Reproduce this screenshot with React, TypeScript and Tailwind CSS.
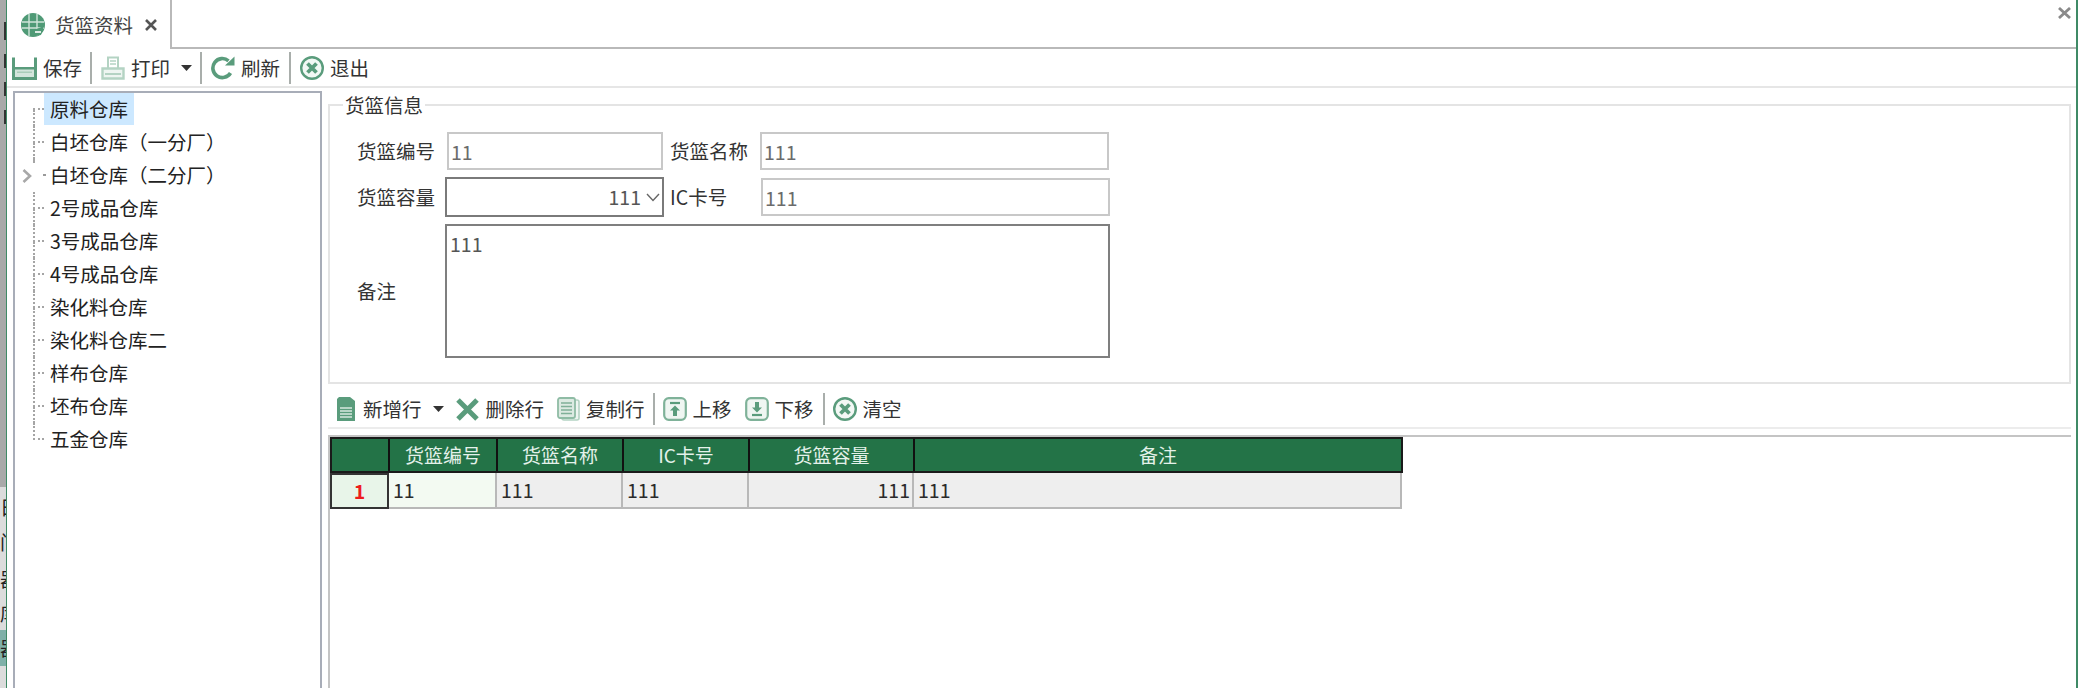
import React from "react";

const G = "#5a9c7c";
const L = "#b4d3c3";

const SaveIcon = () => (
  <svg width="25" height="24" viewBox="0 0 25 24" className="shrink-0">
    <path d="M1.5 1.5V22.5H23.5V1.5" fill="none" stroke={G} strokeWidth="3" />
    <rect x="3" y="13" width="19" height="8" fill="#d3e5db" />
    <rect x="3" y="11" width="19" height="2.5" fill={G} />
    <rect x="5" y="15.5" width="15" height="1.5" fill="#a9cdb9" />
  </svg>
);
const PrintIcon = () => (
  <svg width="24" height="24" viewBox="0 0 24 24" className="shrink-0">
    <path d="M7 12V1.5H17V12" fill="none" stroke={L} strokeWidth="2" />
    <path d="M9 5H15M9 8H15" stroke={L} strokeWidth="1.5" />
    <path d="M1.5 12.5H22.5V22.5H1.5Z" fill="#eef5f1" stroke={L} strokeWidth="2.4" />
    <rect x="4" y="17" width="16" height="2" fill={L} />
  </svg>
);
const RefreshIcon = () => (
  <svg width="24" height="24" viewBox="0 0 24 24" className="shrink-0">
    <path d="M19.5 17A9.5 9.5 0 1 1 17.5 4.8" fill="none" stroke={G} strokeWidth="3.6" />
    <path d="M14 9.5H23.5V0.5Z" fill={G} />
  </svg>
);
const CircleX = ({ s = 24 }: { s?: number }) => (
  <svg width={s} height={s} viewBox="0 0 24 24" className="shrink-0">
    <circle cx="12" cy="12" r="10.8" fill="#f3f8f5" stroke={G} strokeWidth="2.4" />
    <path d="M7.5 7.5L16.5 16.5M16.5 7.5L7.5 16.5" stroke={G} strokeWidth="3.8" />
  </svg>
);
const Caret = () => (
  <svg width="11" height="6" viewBox="0 0 11 6" className="shrink-0">
    <path d="M0 0H11L5.5 6Z" fill="#333" />
  </svg>
);
const NewIcon = () => (
  <svg width="18" height="24" viewBox="0 0 18 24" className="shrink-0">
    <path d="M2 0H13L18 4V24H0V2Z" fill={G} />
    <path d="M3 11H15M3 14H15M3 17H15M3 20H15" stroke="#d7e7de" strokeWidth="1.4" />
  </svg>
);
const DelIcon = () => (
  <svg width="23" height="23" viewBox="0 0 23 23" className="shrink-0">
    <path d="M2 2L21 21M21 2L2 21" stroke={G} strokeWidth="5" />
  </svg>
);
const CopyIcon = () => (
  <svg width="23" height="24" viewBox="0 0 23 24" className="shrink-0">
    <rect x="5" y="3" width="17" height="20" rx="2" fill="#eef5f1" stroke={L} strokeWidth="1.6" />
    <rect x="1" y="1" width="17" height="20" rx="2" fill="#dceae2" stroke="#8fbca5" strokeWidth="1.8" />
    <path d="M4 6H15M4 9.5H15M4 13H15M4 16.5H15" stroke="#7fb098" strokeWidth="1.5" />
  </svg>
);
const UpIcon = () => (
  <svg width="24" height="24" viewBox="0 0 24 24" className="shrink-0">
    <rect x="1.2" y="1.2" width="21.6" height="21.6" rx="4.5" fill="#eff6f2" stroke="#7fb299" strokeWidth="2.2" />
    <path d="M7 6H17" stroke={G} strokeWidth="2.2" />
    <path d="M12 8.5L17 13.5H14V19H10V13.5H7Z" fill={G} />
  </svg>
);
const DownIcon = () => (
  <svg width="24" height="24" viewBox="0 0 24 24" className="shrink-0">
    <rect x="1.2" y="1.2" width="21.6" height="21.6" rx="4.5" fill="#eff6f2" stroke="#7fb299" strokeWidth="2.2" />
    <path d="M7 18H17" stroke={G} strokeWidth="2.2" />
    <path d="M12 15.5L17 10.5H14V5H10V10.5H7Z" fill={G} />
  </svg>
);
const Globe = () => (
  <svg width="24" height="24" viewBox="0 0 24 24" className="shrink-0">
    <circle cx="12" cy="12" r="12" fill="#4f9a76" />
    <path d="M1 9H23M1 15H23M8 1V23M16 1V23" stroke="#cfe4d9" strokeWidth="1.4" />
    <path d="M13 17L23 13L20 22L15 23Z" fill="#4f9a76" />
    <path d="M14 19H20" stroke="#fff" strokeWidth="1.6" />
  </svg>
);
const Sep = ({ h = 32 }: { h?: number }) => (
  <div className="w-[2px] shrink-0 bg-[#a9aeab]" style={{ height: h }} />
);

const treeItems = [
  "原料仓库",
  "白坯仓库（一分厂）",
  "白坯仓库（二分厂）",
  "2号成品仓库",
  "3号成品仓库",
  "4号成品仓库",
  "染化料仓库",
  "染化料仓库二",
  "样布仓库",
  "坯布仓库",
  "五金仓库",
];

const TreeRow = ({ text, index }: { text: string; index: number }) => {
  const first = index === 0;
  const last = index === treeItems.length - 1;
  const expandable = index === 2;
  return (
    <div className="flex h-[33px] items-stretch">
      <div className="w-[18px] shrink-0 flex items-center justify-end pr-[1px]">
        {expandable && (
          <svg width="10" height="14" viewBox="0 0 10 14">
            <path d="M1.5 1L8 7L1.5 13" fill="none" stroke="#a8a8a8" strokeWidth="2.6" />
          </svg>
        )}
      </div>
      <div className="w-[11px] shrink-0 flex flex-col">
        {expandable ? (
          <>
            <div className="h-[4px] border-l-2 border-dotted border-[#a5a5a5]" />
            <div className="h-[13px] ml-[10px] border-b-2 border-dotted border-[#9a9a9a] w-[1px]" />
            <div className="flex-1" />
          </>
        ) : (
          <>
            <div
              className={
                "h-[17px] border-b-2 border-dotted border-[#a5a5a5] " +
                (first ? "" : "border-l-2")
              }
            />
            <div className={"flex-1 border-dotted border-[#a5a5a5] " + (last ? "" : "border-l-2")} />
          </>
        )}
      </div>
      <div
        className={
          "px-[6px] h-[32px] leading-[32px] whitespace-nowrap text-[19.5px] text-[#222] " +
          (first ? "bg-[#cce8ff]" : "")
        }
      >
        {text}
      </div>
    </div>
  );
};

const Field = ({ value, w }: { value: string; w: string }) => (
  <div
    className={
      "h-[38px] border-2 border-[#c8c8c8] px-[2px] leading-[35px] text-[19.5px] text-[#6b6b6b] " + w
    }
  >
    {value}
  </div>
);

const cols = [
  { t: "", w: "w-[58px]" },
  { t: "货篮编号", w: "w-[108px]" },
  { t: "货篮名称", w: "w-[126px]" },
  { t: "IC卡号", w: "w-[126px]" },
  { t: "货篮容量", w: "w-[165px]" },
  { t: "备注", w: "w-[486px]" },
];

const StripText = ({ c, h, teal }: { c: string; h: string; teal?: boolean }) => (
  <div
    className={
      "overflow-hidden whitespace-nowrap text-[19px] text-[#222] " + h + (teal ? " bg-[#7fb0a8]" : "")
    }
  >
    {c}
  </div>
);

export default function App() {
  return (
    <div
      className="flex w-[2078px] h-[688px] overflow-hidden bg-white text-[#333]"
      style={{ fontFamily: '"Noto Sans CJK SC", "Noto Sans", sans-serif' }}
    >
      {/* clipped window behind */}
      <div className="w-[6px] shrink-0 h-full flex flex-col overflow-hidden bg-[#dcdcdc]">
        <div className="h-[487px] shrink-0 bg-[#a9a9a9] flex flex-col items-end pt-[22px] gap-[14px]">
          <div className="w-[2px] h-[18px] bg-[#333]" />
          <div className="w-[2px] h-[14px] bg-[#333]" />
          <div className="w-[2px] h-[14px] bg-[#333]" />
          <div className="w-[2px] h-[14px] bg-[#333]" />
        </div>
        <StripText c="日" h="h-[35px] leading-[40px]" />
        <StripText c="门" h="h-[40px] leading-[40px]" />
        <StripText c="器" h="h-[34px] leading-[34px]" />
        <StripText c="库" h="h-[34px] leading-[34px]" />
        <StripText c="器" h="h-[36px] leading-[36px]" teal />
      </div>
      <div className="w-[1px] shrink-0 bg-[#3f8a66]" />

      <div className="w-[2069px] shrink-0 flex flex-col h-full">
        {/* Tab bar */}
        <div className="h-[49px] shrink-0 flex border-b-2 border-[#b9b9b9]">
          <div className="w-[165px] flex items-center pl-[14px] border-r-2 border-[#b9b9b9] h-[49px] bg-white">
            <Globe />
            <span className="ml-[10px] text-[19.5px] text-[#444] whitespace-nowrap">货篮资料</span>
            <svg width="12" height="12" viewBox="0 0 12 12" className="ml-[12px]">
              <path d="M1 1L11 11M11 1L1 11" stroke="#555" strokeWidth="2.6" />
            </svg>
          </div>
          <div className="flex-1 flex justify-end pr-[5px] pt-[7px]">
            <svg width="13" height="12" viewBox="0 0 13 12">
              <path d="M1 1L12 11M12 1L1 11" stroke="#8a8a8a" strokeWidth="2.8" />
            </svg>
          </div>
        </div>

        {/* Toolbar */}
        <div className="h-[39px] shrink-0 flex items-center border-b-2 border-[#e6e6e6] pl-[5px] text-[19.5px] text-[#333]">
          <SaveIcon />
          <span className="ml-[6px] mr-[8px]">保存</span>
          <Sep />
          <div className="w-[9px]" />
          <PrintIcon />
          <span className="ml-[6px] mr-[11px]">打印</span>
          <Caret />
          <div className="w-[8px]" />
          <Sep />
          <div className="w-[9px]" />
          <RefreshIcon />
          <span className="ml-[6px] mr-[9px]">刷新</span>
          <Sep />
          <div className="w-[9px]" />
          <CircleX />
          <span className="ml-[6px]">退出</span>
        </div>

        {/* Body */}
        <div className="flex-1 min-h-0 flex pt-[3px]">
          {/* Tree */}
          <div className="ml-[6px] w-[309px] shrink-0 border-2 border-b-0 border-[#a8adb8] h-[700px] overflow-hidden">
            {treeItems.map((t, i) => (
              <TreeRow key={t} text={t} index={i} />
            ))}
          </div>

          {/* Right */}
          <div className="ml-[6px] flex-1 min-w-0 flex flex-col pr-[5px]">
            <fieldset className="border-2 border-[#e4e4e4] h-[292px] mt-[1px] shrink-0 px-[13px] pb-0">
              <legend className="px-[2px] text-[19.5px] leading-[26px] text-[#333]">货篮信息</legend>
              <div className="flex flex-col pl-[14px] pt-[14px] text-[19.5px] text-[#333]">
                <div className="flex items-center h-[38px]">
                  <span className="w-[90px] whitespace-nowrap">货篮编号</span>
                  <Field value="11" w="w-[216px]" />
                  <span className="ml-[7px] w-[90px] whitespace-nowrap">货篮名称</span>
                  <Field value="111" w="w-[349px]" />
                </div>
                <div className="flex items-center h-[40px] mt-[7px]">
                  <span className="w-[88px] whitespace-nowrap">货篮容量</span>
                  <div className="w-[219px] h-[40px] border-2 border-[#7a7a7a] flex items-center justify-end pr-[2px] text-[#555]">
                    <span>111</span>
                    <svg width="14" height="9" viewBox="0 0 14 9" className="ml-[5px]">
                      <path d="M1 1L7 7.5L13 1" fill="none" stroke="#666" strokeWidth="1.4" />
                    </svg>
                  </div>
                  <span className="ml-[6px] w-[91px] whitespace-nowrap">IC卡号</span>
                  <Field value="111" w="w-[349px]" />
                </div>
                <div className="flex items-center h-[134px] mt-[7px]">
                  <span className="w-[88px] whitespace-nowrap">备注</span>
                  <div className="w-[665px] h-[134px] border-2 border-[#7f7f7f] px-[3px] pt-[3px] leading-[30px] text-[#555]">
                    111
                  </div>
                </div>
              </div>
            </fieldset>

            {/* Row toolbar */}
            <div className="h-[45px] shrink-0 flex items-center border-b-2 border-[#ececec] pl-[9px] pt-[7px] text-[19.5px] text-[#333]">
              <NewIcon />
              <span className="ml-[8px] mr-[11px] whitespace-nowrap">新增行</span>
              <Caret />
              <div className="w-[12px]" />
              <DelIcon />
              <span className="ml-[7px] mr-[13px] whitespace-nowrap">删除行</span>
              <CopyIcon />
              <span className="ml-[6px] mr-[8px] whitespace-nowrap">复制行</span>
              <Sep />
              <div className="w-[8px]" />
              <UpIcon />
              <span className="ml-[6px] mr-[13px] whitespace-nowrap">上移</span>
              <DownIcon />
              <span className="ml-[6px] mr-[9px] whitespace-nowrap">下移</span>
              <Sep />
              <div className="w-[8px]" />
              <CircleX />
              <span className="ml-[6px] whitespace-nowrap">清空</span>
            </div>

            {/* Grid */}
            <div className="mt-[6px] flex-1 border-l-2 border-t-2 border-[#c4c4c4]">
              <div className="flex h-[36px] bg-[#237347] border-2 border-[#1a1a1a] w-fit text-[19px] text-[#e4f1ea]">
                {cols.map((c, i) => (
                  <div
                    key={i}
                    className={
                      "flex items-center justify-center whitespace-nowrap " +
                      c.w +
                      (i < cols.length - 1 ? " border-r-2 border-[#111]" : "")
                    }
                  >
                    {c.t}
                  </div>
                ))}
              </div>
              <div className="flex h-[36px] w-fit text-[19.5px] text-[#2a2a2a]">
                <div className="w-[59px] bg-[#e8f5e9] border-2 border-[#333] flex items-center justify-center font-bold text-[#ee1c1c]">
                  1
                </div>
                <div className="w-[108px] bg-[#f3faf2] border-b-2 border-r-2 border-[#b8b8b8] pl-[4px] leading-[33px]">
                  11
                </div>
                <div className="w-[126px] bg-[#eeeeee] border-b-2 border-r-2 border-[#b8b8b8] pl-[4px] leading-[33px]">
                  111
                </div>
                <div className="w-[126px] bg-[#eeeeee] border-b-2 border-r-2 border-[#b8b8b8] pl-[4px] leading-[33px]">
                  111
                </div>
                <div className="w-[165px] bg-[#eeeeee] border-b-2 border-r-2 border-[#b8b8b8] pr-[2px] text-right leading-[33px]">
                  111
                </div>
                <div className="w-[488px] bg-[#eeeeee] border-b-2 border-r-2 border-[#b8b8b8] pl-[4px] leading-[33px]">
                  111
                </div>
              </div>
            </div>
          </div>
        </div>
      </div>
      <div className="w-[2px] shrink-0 bg-[#3f8a66]" />
    </div>
  );
}
